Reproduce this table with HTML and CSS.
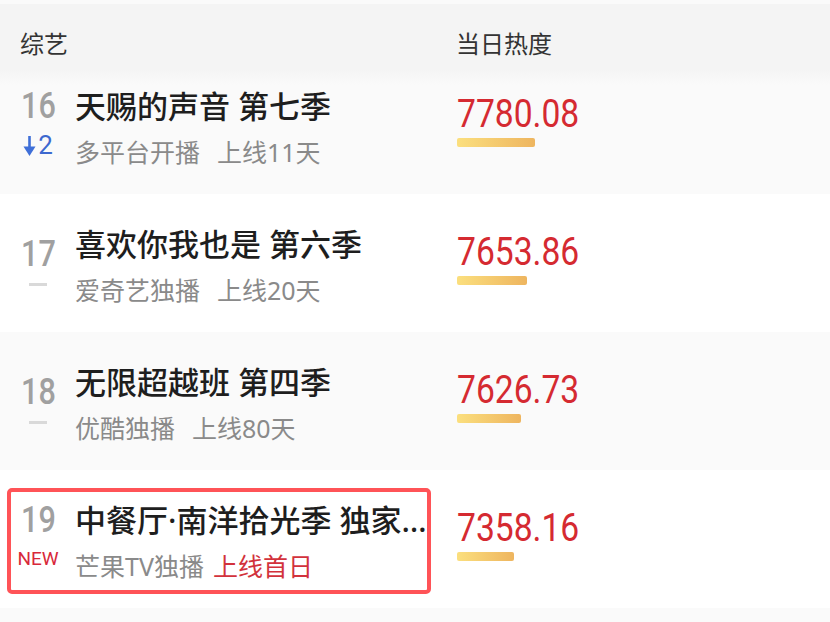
FILE: index.html
```html
<!DOCTYPE html>
<html lang="zh-CN">
<head>
<meta charset="utf-8">
<title>综艺 当日热度</title>
<link rel="stylesheet" href="styles.css">
</head>
<body>
<div class="page">
  <div class="list">
    <div class="row row--shade">
      <div class="item">
        <div class="rank">
          <span class="rank-num">16</span>
          <span class="trend trend--down"><svg class="trend-arrow" width="13" height="22" viewBox="0 0 13 22"><rect x="5.2" y="1" width="2.6" height="12" fill="#3f6fd8"/><path d="M0.5 11.5 L12.5 11.5 L6.5 21 Z" fill="#3f6fd8"/></svg>2</span>
        </div>
        <div class="info">
          <div class="title">天赐的声音 第七季</div>
          <div class="meta"><span>多平台开播</span><span class="meta-date">上线11天</span></div>
        </div>
      </div>
      <div class="heat">
        <div class="heat-num">7780.08</div>
        <div class="heat-bar" style="width:78px"></div>
      </div>
    </div>

    <div class="row">
      <div class="item">
        <div class="rank">
          <span class="rank-num">17</span>
          <span class="dash"></span>
        </div>
        <div class="info">
          <div class="title">喜欢你我也是 第六季</div>
          <div class="meta"><span>爱奇艺独播</span><span class="meta-date">上线20天</span></div>
        </div>
      </div>
      <div class="heat">
        <div class="heat-num">7653.86</div>
        <div class="heat-bar" style="width:70px"></div>
      </div>
    </div>

    <div class="row row--shade">
      <div class="item">
        <div class="rank">
          <span class="rank-num">18</span>
          <span class="dash"></span>
        </div>
        <div class="info">
          <div class="title">无限超越班 第四季</div>
          <div class="meta"><span>优酷独播</span><span class="meta-date">上线80天</span></div>
        </div>
      </div>
      <div class="heat">
        <div class="heat-num">7626.73</div>
        <div class="heat-bar" style="width:64px"></div>
      </div>
    </div>

    <div class="row">
      <div class="item item--focus">
        <div class="rank">
          <span class="rank-num">19</span>
          <span class="trend trend--new">NEW</span>
        </div>
        <div class="info">
          <div class="title">中餐厅·南洋拾光季 独家记忆</div>
          <div class="meta"><span>芒果TV独播</span><span class="meta-date meta-date--new">上线首日</span></div>
        </div>
      </div>
      <div class="heat">
        <div class="heat-num">7358.16</div>
        <div class="heat-bar" style="width:57px"></div>
      </div>
    </div>
  </div>

  <header class="head">
    <span class="head-name">综艺</span>
    <span class="head-heat">当日热度</span>
  </header>
</div>
</body>
</html>
```
FILE: styles.css
```css
html, body {
  margin: 0;
  padding: 0;
}
body {
  width: 830px;
  height: 622px;
  overflow: hidden;
  background: #fafafa;
  font-family: "Noto Sans", "Noto Sans CJK SC", sans-serif;
}
.page {
  position: relative;
  width: 830px;
  height: 622px;
  background: #fafafa;
}
.list {
  padding-top: 56px;
}
.head {
  position: absolute;
  top: 4px;
  left: 0;
  right: 0;
  height: 81px;
  box-sizing: border-box;
  padding: 24px 0 0 20px;
  display: flex;
  align-items: flex-start;
  font-size: 24px;
  line-height: 32px;
  color: #333;
  background: linear-gradient(to bottom, #f4f4f4 0, #f4f4f4 80%, rgba(250,250,250,0) 100%);
}
.head-name {
  width: 436px;
}
.row {
  height: 138px;
  box-sizing: border-box;
  padding-top: 3px;
  display: flex;
  align-items: center;
  background: #fff;
}
.row--shade {
  background: #fafafa;
}
.item {
  width: 424px;
  height: 106px;
  margin-left: 7px;
  box-sizing: border-box;
  border: 4px solid transparent;
  border-radius: 5px;
  display: flex;
  align-items: center;
}
.item--focus {
  border-color: #ff5357;
}
.rank {
  width: 54px;
  margin-right: 10px;
  padding-bottom: 7px;
  display: flex;
  flex-direction: column;
  align-items: center;
  flex-shrink: 0;
}
.rank-num {
  display: block;
  font-family: Roboto, sans-serif;
  font-weight: 500;
  font-size: 36px;
  line-height: 34px;
  color: #a0a0a0;
  transform: scaleX(0.85);
}
.trend {
  height: 24px;
  margin-top: 10px;
  display: flex;
  align-items: center;
  font-family: Roboto, sans-serif;
  line-height: 24px;
}
.trend--down {
  font-size: 26px;
  color: #3d68cf;
}
.trend-arrow {
  margin-right: 2px;
  margin-top: 2px;
}
.trend--new {
  font-size: 19px;
  color: #d8283a;
}
.dash {
  display: block;
  width: 18px;
  height: 3px;
  margin-top: 12px;
  background: #d9d9d9;
}
.info {
  flex: 1;
  min-width: 0;
  display: flex;
  flex-direction: column;
  justify-content: center;
}
.title {
  font-size: 31px;
  line-height: 40px;
  font-weight: 500;
  color: #1e1e1e;
  white-space: nowrap;
  overflow: hidden;
  text-overflow: ellipsis;
}
.meta {
  margin-top: 10px;
  font-size: 25px;
  line-height: 32px;
  color: #8a8a8a;
  white-space: nowrap;
}
.meta-date {
  margin-left: 17px;
}
.meta-date--new {
  margin-left: 9px;
  color: #d2323c;
}
.heat {
  margin-left: 26px;
  padding-bottom: 13px;
  display: flex;
  flex-direction: column;
  align-items: flex-start;
}
.heat-num {
  font-family: Roboto, sans-serif;
  font-size: 38px;
  line-height: 40px;
  color: #d52a31;
  transform: scaleX(0.885);
  transform-origin: left center;
}
.heat-bar {
  height: 9px;
  margin-top: 4px;
  border-radius: 2px;
  background: linear-gradient(to right, #fbdf7e, #eeb55f);
}
```
